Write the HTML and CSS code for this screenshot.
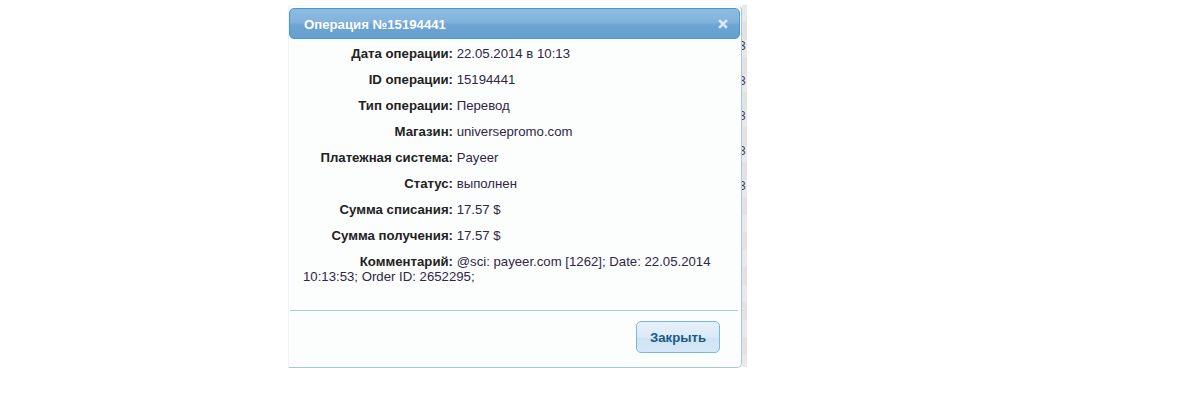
FILE: index.html
```html
<!DOCTYPE html>
<html lang="ru">
<head>
<meta charset="utf-8">
<title>Операция №15194441</title>
<link rel="stylesheet" href="styles.css">
</head>
<body>
<div class="stage">
  <div class="dialog">
    <div class="titlebar">
      <span class="title">Операция №15194441</span>
      <span class="close" aria-label="close">
        <svg width="10" height="10" viewBox="0 0 10 10"><path d="M2 2 L8 8 M8 2 L2 8" stroke="#dbe8f4" stroke-width="2.6" stroke-linecap="square"/></svg>
      </span>
    </div>
    <div class="content">
      <div class="row"><span class="label">Дата операции:</span> <span class="value">22.05.2014 в 10:13</span></div>
      <div class="row"><span class="label">ID операции:</span> <span class="value">15194441</span></div>
      <div class="row"><span class="label">Тип операции:</span> <span class="value">Перевод</span></div>
      <div class="row"><span class="label">Магазин:</span> <span class="value">universepromo.com</span></div>
      <div class="row"><span class="label">Платежная система:</span> <span class="value">Payeer</span></div>
      <div class="row"><span class="label">Статус:</span> <span class="value">выполнен</span></div>
      <div class="row"><span class="label">Сумма списания:</span> <span class="value">17.57 $</span></div>
      <div class="row"><span class="label">Сумма получения:</span> <span class="value">17.57 $</span></div>
      <div class="row"><span class="label">Комментарий:</span> <span class="value">@sci: payeer.com [1262]; Date: 22.05.2014 10:13:53; Order ID: 2652295;</span></div>
    </div>
    <div class="buttonpane">
      <button class="btn" type="button">Закрыть</button>
    </div>
  </div>
  <div class="backstrip">
    <span class="g g-top">]</span>
    <span class="g">3</span>
    <span class="g">3</span>
    <span class="g">3</span>
    <span class="g">3</span>
    <span class="g">3</span>
  </div>
</div>
</body>
</html>
```

FILE: styles.css
```css
html, body {
  margin: 0;
  padding: 0;
  background: #ffffff;
}

body {
  font-family: "Liberation Sans", Arial, sans-serif;
  font-size: 13.2px;
  color: #222222;
}

.stage {
  display: flex;
  align-items: flex-start;
  padding: 5px 0 0 288px;
}

.dialog {
  width: 451px;
  height: 359px;
  border: 1px solid #a6c9e2;
  border-left-color: #eef4f9;
  border-top-color: #f3f7fb;
  border-radius: 0 5px 5px 0;
  background: #fcfdfd;
  padding: 2px 1px 0 0;
  display: flex;
  flex-direction: column;
}

.titlebar {
  height: 29px;
  border: 1px solid #4a98d6;
  border-radius: 5px;
  background: linear-gradient(to bottom, #8fbde2 0%, #82b3dc 45%, #6da4d2 55%, #64a0d0 100%);
  display: flex;
  align-items: center;
  justify-content: space-between;
  padding: 0 11px 0 14px;
}

.title {
  color: #ffffff;
  font-weight: bold;
  font-size: 13.2px;
  padding-top: 1px;
}

.close {
  display: flex;
  width: 10px;
  height: 10px;
  margin-top: 1px;
}

.content {
  padding: 7px 14px 0 14px;
  flex: 1;
}

.row {
  line-height: 15px;
  margin-bottom: 11px;
}

.label {
  display: inline-block;
  width: 150px;
  text-align: right;
  font-weight: bold;
  color: #222222;
}

.value {
  color: #2f2744;
}

.buttonpane {
  border-top: 1px solid #a6c9e2;
  margin: 0 2px 0 1px;
  padding: 10px 18px 14px 0;
  display: flex;
  justify-content: flex-end;
}

.btn {
  width: 84px;
  height: 32px;
  border: 1px solid #79b7e7;
  border-radius: 5px;
  background: linear-gradient(to bottom, #e6f1fb 0%, #dbeaf8 50%, #cfe3f5 55%, #d6e8f7 100%);
  color: #1d5987;
  font-family: "Liberation Sans", Arial, sans-serif;
  font-size: 13.2px;
  font-weight: bold;
  padding: 0;
  margin: 0;
}

.backstrip {
  width: 5px;
  height: 362px;
  overflow: hidden;
  background: repeating-linear-gradient(to bottom, #e9e9e9 0px, #e9e9e9 17px, #e2e2e2 17px, #e2e2e2 35px);
  display: flex;
  flex-direction: column;
}

.g {
  display: block;
  height: 35px;
  line-height: 12px;
  font-size: 12px;
  color: #4a3a5e;
  margin-left: -3px;
}

.g-top {
  padding-top: 4px;
  box-sizing: border-box;
  color: #8a7050;
}
```
